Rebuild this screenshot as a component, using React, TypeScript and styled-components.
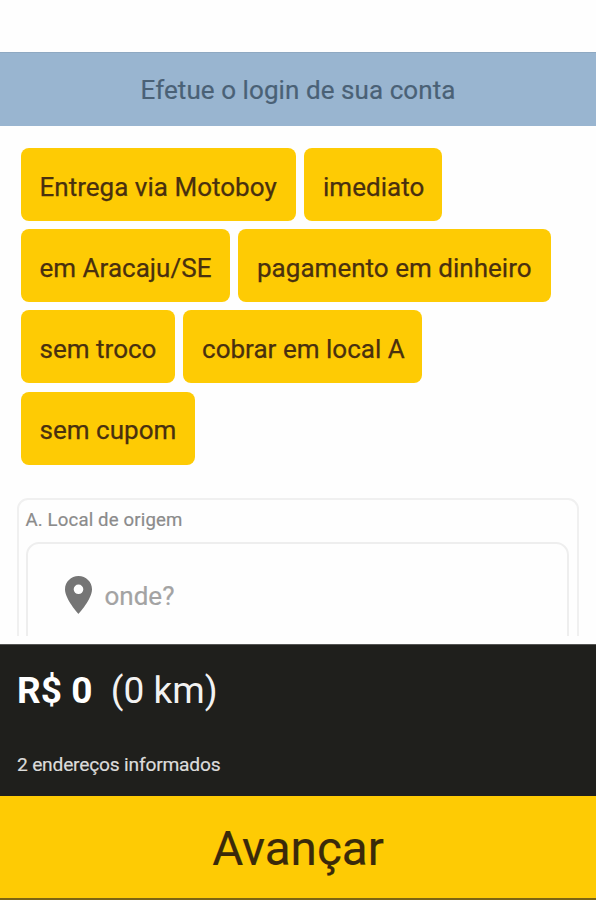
import React from 'react';
import styled, { createGlobalStyle } from 'styled-components';

const GlobalStyle = createGlobalStyle`
  * { box-sizing: border-box; }
  body { margin: 0; background: #fefefe; }
`;

const Screen = styled.div`
  display: flex;
  flex-direction: column;
  width: 596px;
  height: 900px;
  padding-top: 52px;
  overflow: hidden;
  background: #fefefe;
  font-family: Roboto, 'Liberation Sans', sans-serif;
  white-space: pre;
`;

const LoginBanner = styled.div`
  flex: none;
  height: 74px;
  border-top: 1px solid #8fa9c2;
  background: #99b5d0;
  color: #4a6176;
  font-size: 26px;
  line-height: 74px;
  letter-spacing: 0.07px;
  text-align: center;
  -webkit-text-stroke: 0.2px currentColor;
`;

const Chips = styled.div`
  flex: none;
  display: flex;
  flex-direction: column;
  gap: 8.2px;
  padding: 22px 20.5px 0;
`;

const ChipRow = styled.div`
  display: flex;
  gap: 8px;
`;

const Chip = styled.button<{ $width: number }>`
  width: ${(p) => p.$width}px;
  height: 73px;
  padding: 4px 0 0 19px;
  border: 0;
  border-radius: 8px;
  background: #fecb04;
  color: #49300f;
  font-family: inherit;
  font-size: 26px;
  letter-spacing: 0.02px;
  text-align: left;
  white-space: pre;
  -webkit-text-stroke: 0.25px currentColor;
`;

const OriginArea = styled.div`
  flex: none;
  height: 138px;
  margin-top: 33px;
  padding: 0 17px 0 16.5px;
  overflow: hidden;
`;

const OriginCard = styled.section`
  height: 160px;
  padding: 0 8px 0 7px;
  border: 2px solid #f0f0f0;
  border-radius: 11px;
`;

const OriginLabel = styled.div`
  height: 42px;
  color: #8b8b8b;
  font-size: 18.6px;
  line-height: 40px;
  letter-spacing: 0.15px;
  -webkit-text-stroke: 0.2px currentColor;
`;

const PlaceField = styled.div`
  display: flex;
  align-items: center;
  gap: 13px;
  height: 108px;
  padding-left: 37px;
  border: 2px solid #eeeeee;
  border-radius: 13px;
`;

const PinIcon = styled.svg`
  display: block;
  width: 27px;
  height: 38px;
  margin-top: -2px;
  fill: #757575;
`;

const Placeholder = styled.span`
  padding-top: 1px;
  color: #a3a3a3;
  font-size: 26px;
  -webkit-text-stroke: 0.2px currentColor;
`;

const Summary = styled.footer`
  flex: none;
  height: 152px;
  margin-top: auto;
  padding: 24px 17px 0;
  border-top: 1px solid #555553;
  background: #1f1f1c;
  color: #f2f2f2;
`;

const PriceLine = styled.div`
  display: flex;
  gap: 18.5px;
  height: 44px;
  font-size: 37px;
  line-height: 44px;
`;

const Price = styled.strong`
  color: #ffffff;
  font-weight: 700;
`;

const AddressCount = styled.div`
  margin-top: 40px;
  color: #dcdcdb;
  font-size: 19.2px;
  line-height: 24px;
  letter-spacing: -0.2px;
  -webkit-text-stroke: 0.2px currentColor;
`;

const NextButton = styled.button`
  flex: none;
  height: 104px;
  padding: 4px 0 0;
  border: 0;
  border-bottom: 2px solid #7c6514;
  background: #fecb04;
  color: #3a2a0a;
  font-family: inherit;
  font-size: 47.6px;
  text-align: center;
  -webkit-text-stroke: 0.2px currentColor;
`;

const chipRows = [
  [
    { label: 'Entrega via Motoboy', width: 275.5 },
    { label: 'imediato', width: 138 },
  ],
  [
    { label: 'em Aracaju/SE', width: 209.5 },
    { label: 'pagamento em dinheiro', width: 313 },
  ],
  [
    { label: 'sem troco', width: 154.5 },
    { label: 'cobrar em local A', width: 239 },
  ],
  [{ label: 'sem cupom', width: 174.5 }],
];

export default function App() {
  return (
    <>
      <GlobalStyle />
      <Screen>
        <LoginBanner>Efetue o login de sua conta</LoginBanner>
        <Chips>
          {chipRows.map((row) => (
            <ChipRow key={row[0].label}>
              {row.map((chip) => (
                <Chip key={chip.label} $width={chip.width}>
                  {chip.label}
                </Chip>
              ))}
            </ChipRow>
          ))}
        </Chips>
        <OriginArea>
          <OriginCard>
            <OriginLabel>A. Local de origem</OriginLabel>
            <PlaceField>
              <PinIcon viewBox="5 2 14 20" preserveAspectRatio="none">
                <path d="M12 2C8.13 2 5 5.13 5 9c0 5.25 7 13 7 13s7-7.75 7-13c0-3.87-3.13-7-7-7zm0 9.5a2.5 2.5 0 0 1 0-5 2.5 2.5 0 0 1 0 5z" />
              </PinIcon>
              <Placeholder>onde?</Placeholder>
            </PlaceField>
          </OriginCard>
        </OriginArea>
        <Summary>
          <PriceLine>
            <Price>R$ 0</Price>
            <span>(0 km)</span>
          </PriceLine>
          <AddressCount>2 endereços informados</AddressCount>
        </Summary>
        <NextButton>Avançar</NextButton>
      </Screen>
    </>
  );
}
